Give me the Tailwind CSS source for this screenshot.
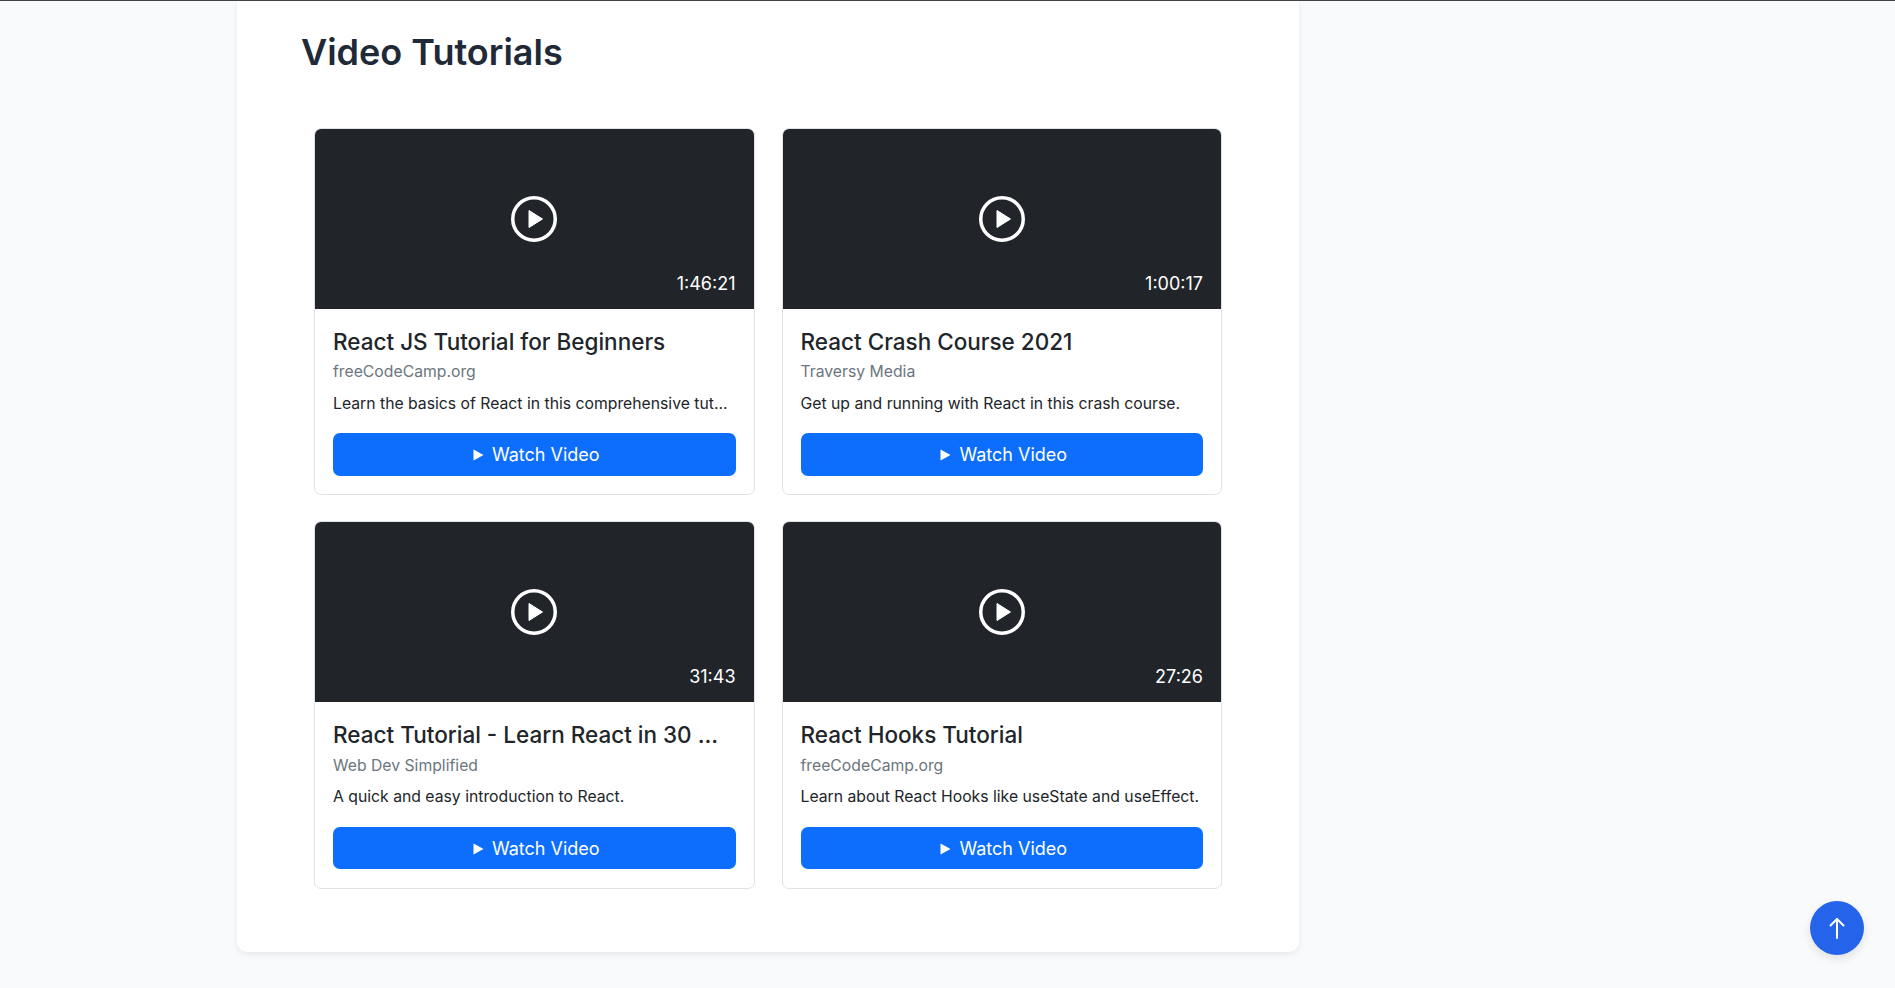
<!DOCTYPE html>
<html lang="en">
  <head>
    <meta charset="UTF-8" />
    <title>Video Tutorials</title>
    <script src="https://cdn.jsdelivr.net/npm/@tailwindcss/browser@4"></script>
  </head>
  <body class="h-screen overflow-hidden bg-[#f9fafb] font-['Inter',sans-serif] text-[#212529]">
    <div class="h-px bg-[#444]"></div>

    <main class="ml-[237px] w-[1062px] h-[951px] bg-white rounded-b-[10px] shadow-[0_2px_6px_rgba(0,0,0,0.08)] px-16 pt-[28px]">
      <h2 class="text-[36px] leading-[46px] font-semibold text-[#1f2937]">Video Tutorials</h2>

      <div class="grid grid-cols-2 gap-x-[27px] gap-y-[26px] mx-[13px] mt-[52.5px]">
        <!-- Video 1 -->
        <div class="bg-white border border-[#dee2e6] rounded-[7px] overflow-hidden">
          <div class="relative h-[180px] bg-[#212529] flex items-center justify-center">
            <svg class="w-[46px] h-[46px] text-white" viewBox="0 0 46 46" fill="none">
              <circle cx="23" cy="23" r="21.25" stroke="currentColor" stroke-width="3.5"></circle>
              <path d="M18 14.5v17l13.5-8.5z" fill="currentColor" stroke="currentColor" stroke-width="1" stroke-linejoin="round"></path>
            </svg>
            <span class="absolute right-[18px] bottom-[12px] text-[18px] leading-[27px] text-white">1:46:21</span>
          </div>
          <div class="px-[18px] pt-[19px] pb-[18.5px]">
            <h5 class="text-[22.5px] leading-[27px] font-medium">React JS Tutorial for Beginners</h5>
            <p class="text-[15.75px] leading-[23.6px] mt-[5.5px] text-[#6c757d]">freeCodeCamp.org</p>
            <p class="text-[15.75px] leading-[23.6px] mt-[8px]">Learn the basics of React in this comprehensive tut...</p>
            <button class="mt-[18px] w-full h-[42.5px] pl-[4px] pt-px bg-[#0d6efd] text-white text-[18px] rounded-[7px] flex items-center justify-center gap-[8px]">
              <svg class="w-[11px] h-[12px]" viewBox="0 0 11 12" fill="currentColor"><path d="M0.5 0.5v11l10-5.5z"></path></svg>
              Watch Video
            </button>
          </div>
        </div>

        <!-- Video 2 -->
        <div class="bg-white border border-[#dee2e6] rounded-[7px] overflow-hidden">
          <div class="relative h-[180px] bg-[#212529] flex items-center justify-center">
            <svg class="w-[46px] h-[46px] text-white" viewBox="0 0 46 46" fill="none">
              <circle cx="23" cy="23" r="21.25" stroke="currentColor" stroke-width="3.5"></circle>
              <path d="M18 14.5v17l13.5-8.5z" fill="currentColor" stroke="currentColor" stroke-width="1" stroke-linejoin="round"></path>
            </svg>
            <span class="absolute right-[18px] bottom-[12px] text-[18px] leading-[27px] text-white">1:00:17</span>
          </div>
          <div class="px-[18px] pt-[19px] pb-[18.5px]">
            <h5 class="text-[22.5px] leading-[27px] font-medium">React Crash Course 2021</h5>
            <p class="text-[15.75px] leading-[23.6px] mt-[5.5px] text-[#6c757d]">Traversy Media</p>
            <p class="text-[15.75px] leading-[23.6px] mt-[8px]">Get up and running with React in this crash course.</p>
            <button class="mt-[18px] w-full h-[42.5px] pl-[4px] pt-px bg-[#0d6efd] text-white text-[18px] rounded-[7px] flex items-center justify-center gap-[8px]">
              <svg class="w-[11px] h-[12px]" viewBox="0 0 11 12" fill="currentColor"><path d="M0.5 0.5v11l10-5.5z"></path></svg>
              Watch Video
            </button>
          </div>
        </div>

        <!-- Video 3 -->
        <div class="bg-white border border-[#dee2e6] rounded-[7px] overflow-hidden">
          <div class="relative h-[180px] bg-[#212529] flex items-center justify-center">
            <svg class="w-[46px] h-[46px] text-white" viewBox="0 0 46 46" fill="none">
              <circle cx="23" cy="23" r="21.25" stroke="currentColor" stroke-width="3.5"></circle>
              <path d="M18 14.5v17l13.5-8.5z" fill="currentColor" stroke="currentColor" stroke-width="1" stroke-linejoin="round"></path>
            </svg>
            <span class="absolute right-[18px] bottom-[12px] text-[18px] leading-[27px] text-white">31:43</span>
          </div>
          <div class="px-[18px] pt-[19px] pb-[18.5px]">
            <h5 class="text-[22.5px] leading-[27px] font-medium">React Tutorial - Learn React in 30 ...</h5>
            <p class="text-[15.75px] leading-[23.6px] mt-[5.5px] text-[#6c757d]">Web Dev Simplified</p>
            <p class="text-[15.75px] leading-[23.6px] mt-[8px]">A quick and easy introduction to React.</p>
            <button class="mt-[18px] w-full h-[42.5px] pl-[4px] pt-px bg-[#0d6efd] text-white text-[18px] rounded-[7px] flex items-center justify-center gap-[8px]">
              <svg class="w-[11px] h-[12px]" viewBox="0 0 11 12" fill="currentColor"><path d="M0.5 0.5v11l10-5.5z"></path></svg>
              Watch Video
            </button>
          </div>
        </div>

        <!-- Video 4 -->
        <div class="bg-white border border-[#dee2e6] rounded-[7px] overflow-hidden">
          <div class="relative h-[180px] bg-[#212529] flex items-center justify-center">
            <svg class="w-[46px] h-[46px] text-white" viewBox="0 0 46 46" fill="none">
              <circle cx="23" cy="23" r="21.25" stroke="currentColor" stroke-width="3.5"></circle>
              <path d="M18 14.5v17l13.5-8.5z" fill="currentColor" stroke="currentColor" stroke-width="1" stroke-linejoin="round"></path>
            </svg>
            <span class="absolute right-[18px] bottom-[12px] text-[18px] leading-[27px] text-white">27:26</span>
          </div>
          <div class="px-[18px] pt-[19px] pb-[18.5px]">
            <h5 class="text-[22.5px] leading-[27px] font-medium">React Hooks Tutorial</h5>
            <p class="text-[15.75px] leading-[23.6px] mt-[5.5px] text-[#6c757d]">freeCodeCamp.org</p>
            <p class="text-[15.75px] leading-[23.6px] mt-[8px]">Learn about React Hooks like useState and useEffect.</p>
            <button class="mt-[18px] w-full h-[42.5px] pl-[4px] pt-px bg-[#0d6efd] text-white text-[18px] rounded-[7px] flex items-center justify-center gap-[8px]">
              <svg class="w-[11px] h-[12px]" viewBox="0 0 11 12" fill="currentColor"><path d="M0.5 0.5v11l10-5.5z"></path></svg>
              Watch Video
            </button>
          </div>
        </div>
      </div>
    </main>

    <!-- Scroll to top -->
    <button class="fixed right-[31px] bottom-[33px] w-[54px] h-[54px] rounded-full bg-[#2563eb] text-white flex items-center justify-center shadow-[0_4px_10px_rgba(0,0,0,0.1)]">
      <svg class="w-[24px] h-[24px]" viewBox="0 0 24 24" fill="none" stroke="currentColor" stroke-width="2" stroke-linecap="round" stroke-linejoin="round">
        <path d="M12 22V3"></path>
        <path d="M5.5 9.5 12 3l6.5 6.5"></path>
      </svg>
    </button>
  </body>
</html>
